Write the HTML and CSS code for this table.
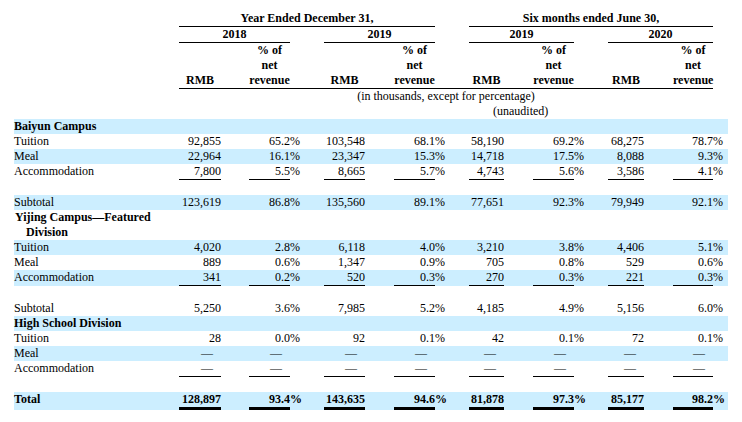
FILE: index.html
```html
<!DOCTYPE html>
<html>
<head>
<meta charset="utf-8">
<link rel="stylesheet" href="styles.css">
</head>
<body>
<div class="page">
<table class="fin">
<colgroup>
<col class="w-label"><col class="w42"><col class="w28"><col class="w41"><col class="w10"><col class="w24">
<col class="w41"><col class="w29"><col class="w41"><col class="w10"><col class="w24">
<col class="w35"><col class="w29"><col class="w41"><col class="w10"><col class="w24">
<col class="w36"><col class="w29"><col class="w40"><col class="w10"><col class="w5">
</colgroup>
<tr>
<td></td>
<td colspan="8" class="c b bb">Year Ended December 31,</td>
<td colspan="2"></td>
<td colspan="8" class="c b bb">Six months ended June 30,</td>
<td colspan="2"></td>
</tr>
<tr>
<td></td>
<td colspan="3" class="c b bb">2018</td><td colspan="2"></td>
<td colspan="3" class="c b bb">2019</td><td colspan="2"></td>
<td colspan="3" class="c b bb">2019</td><td colspan="2"></td>
<td colspan="3" class="c b bb">2020</td><td colspan="2"></td>
</tr>
<tr class="hdr">
<td></td>
<td class="c b bb">RMB</td><td class="bb"></td><td class="c b bb">% of<br>net<br>revenue</td><td class="bb"></td><td class="bb"></td>
<td class="c b bb">RMB</td><td class="bb"></td><td class="c b bb">% of<br>net<br>revenue</td><td class="bb"></td><td class="bb"></td>
<td class="c b bb">RMB</td><td class="bb"></td><td class="c b bb">% of<br>net<br>revenue</td><td class="bb"></td><td class="bb"></td>
<td class="c b bb">RMB</td><td class="bb"></td><td class="c b bb">% of<br>net<br>revenue</td>
<td colspan="2"></td>
</tr>
<tr>
<td></td>
<td colspan="18" class="c note">(in thousands, except for percentage)</td>
<td colspan="2"></td>
</tr>
<tr>
<td></td>
<td colspan="10"></td>
<td colspan="8" class="unaud">(unaudited)</td>
<td colspan="2"></td>
</tr>

<tr class="hl"><td class="lbl b">Baiyun Campus</td><td colspan="20"></td></tr>
<tr>
<td class="lbl">Tuition</td>
<td class="r">92,855</td><td></td><td class="r">65.2</td><td>%</td><td></td>
<td class="r">103,548</td><td></td><td class="r">68.1</td><td>%</td><td></td>
<td class="r">58,190</td><td></td><td class="r">69.2</td><td>%</td><td></td>
<td class="r">68,275</td><td></td><td class="r">78.7</td><td>%</td><td></td>
</tr>
<tr class="hl">
<td class="lbl">Meal</td>
<td class="r">22,964</td><td></td><td class="r">16.1</td><td>%</td><td></td>
<td class="r">23,347</td><td></td><td class="r">15.3</td><td>%</td><td></td>
<td class="r">14,718</td><td></td><td class="r">17.5</td><td>%</td><td></td>
<td class="r">8,088</td><td></td><td class="r">9.3</td><td>%</td><td></td>
</tr>
<tr>
<td class="lbl">Accommodation</td>
<td class="r bb">7,800</td><td></td><td class="r bb">5.5</td><td>%</td><td></td>
<td class="r bb">8,665</td><td></td><td class="r bb">5.7</td><td>%</td><td></td>
<td class="r bb">4,743</td><td></td><td class="r bb">5.6</td><td>%</td><td></td>
<td class="r bb">3,586</td><td></td><td class="r bb">4.1</td><td>%</td><td></td>
</tr>
<tr class="sp"><td colspan="21"></td></tr>
<tr class="hl">
<td class="lbl">Subtotal</td>
<td class="r">123,619</td><td></td><td class="r">86.8</td><td>%</td><td></td>
<td class="r">135,560</td><td></td><td class="r">89.1</td><td>%</td><td></td>
<td class="r">77,651</td><td></td><td class="r">92.3</td><td>%</td><td></td>
<td class="r">79,949</td><td></td><td class="r">92.1</td><td>%</td><td></td>
</tr>

<tr><td class="lbl b wrap">Yijing Campus—Featured Division</td><td colspan="20"></td></tr>
<tr class="hl">
<td class="lbl">Tuition</td>
<td class="r">4,020</td><td></td><td class="r">2.8</td><td>%</td><td></td>
<td class="r">6,118</td><td></td><td class="r">4.0</td><td>%</td><td></td>
<td class="r">3,210</td><td></td><td class="r">3.8</td><td>%</td><td></td>
<td class="r">4,406</td><td></td><td class="r">5.1</td><td>%</td><td></td>
</tr>
<tr>
<td class="lbl">Meal</td>
<td class="r">889</td><td></td><td class="r">0.6</td><td>%</td><td></td>
<td class="r">1,347</td><td></td><td class="r">0.9</td><td>%</td><td></td>
<td class="r">705</td><td></td><td class="r">0.8</td><td>%</td><td></td>
<td class="r">529</td><td></td><td class="r">0.6</td><td>%</td><td></td>
</tr>
<tr class="hl">
<td class="lbl">Accommodation</td>
<td class="r bb">341</td><td></td><td class="r bb">0.2</td><td>%</td><td></td>
<td class="r bb">520</td><td></td><td class="r bb">0.3</td><td>%</td><td></td>
<td class="r bb">270</td><td></td><td class="r bb">0.3</td><td>%</td><td></td>
<td class="r bb">221</td><td></td><td class="r bb">0.3</td><td>%</td><td></td>
</tr>
<tr class="sp"><td colspan="21"></td></tr>
<tr>
<td class="lbl">Subtotal</td>
<td class="r">5,250</td><td></td><td class="r">3.6</td><td>%</td><td></td>
<td class="r">7,985</td><td></td><td class="r">5.2</td><td>%</td><td></td>
<td class="r">4,185</td><td></td><td class="r">4.9</td><td>%</td><td></td>
<td class="r">5,156</td><td></td><td class="r">6.0</td><td>%</td><td></td>
</tr>

<tr class="hl"><td class="lbl b">High School Division</td><td colspan="20"></td></tr>
<tr>
<td class="lbl">Tuition</td>
<td class="r">28</td><td></td><td class="r">0.0</td><td>%</td><td></td>
<td class="r">92</td><td></td><td class="r">0.1</td><td>%</td><td></td>
<td class="r">42</td><td></td><td class="r">0.1</td><td>%</td><td></td>
<td class="r">72</td><td></td><td class="r">0.1</td><td>%</td><td></td>
</tr>
<tr class="hl">
<td class="lbl">Meal</td>
<td class="r dash">—</td><td></td><td class="r dash">—</td><td></td><td></td>
<td class="r dash">—</td><td></td><td class="r dash">—</td><td></td><td></td>
<td class="r dash">—</td><td></td><td class="r dash">—</td><td></td><td></td>
<td class="r dash">—</td><td></td><td class="r dash">—</td><td></td><td></td>
</tr>
<tr>
<td class="lbl">Accommodation</td>
<td class="r dash bb">—</td><td></td><td class="r dash bb">—</td><td></td><td></td>
<td class="r dash bb">—</td><td></td><td class="r dash bb">—</td><td></td><td></td>
<td class="r dash bb">—</td><td></td><td class="r dash bb">—</td><td></td><td></td>
<td class="r dash bb">—</td><td></td><td class="r dash bb">—</td><td></td><td></td>
</tr>
<tr class="sp"><td colspan="21"></td></tr>
<tr class="hl b">
<td class="lbl">Total</td>
<td class="r bt">128,897</td><td></td><td class="r bt">93.4</td><td>%</td><td></td>
<td class="r bt">143,635</td><td></td><td class="r bt">94.6</td><td>%</td><td></td>
<td class="r bt">81,878</td><td></td><td class="r bt">97.3</td><td>%</td><td></td>
<td class="r bt">85,177</td><td></td><td class="r bt">98.2</td><td>%</td><td></td>
</tr>
</table>
</div>
</body>
</html>
```
FILE: styles.css
```css
html, body {
  margin: 0;
  padding: 0;
  background: #ffffff;
}

.page {
  padding: 11px 0 0 14px;
}

.fin {
  border-collapse: separate;
  border-spacing: 0;
  table-layout: fixed;
  width: 714px;
  font-family: "Liberation Serif", "Times New Roman", serif;
  font-size: 12px;
  line-height: 15px;
  color: #000000;
}

.fin td {
  padding: 0;
  vertical-align: top;
  white-space: nowrap;
}

.w-label { width: 165px; }
.w42 { width: 42px; }
.w41 { width: 41px; }
.w40 { width: 40px; }
.w36 { width: 36px; }
.w35 { width: 35px; }
.w29 { width: 29px; }
.w28 { width: 28px; }
.w24 { width: 24px; }
.w10 { width: 10px; }
.w5 { width: 5px; }

.hl { background: #cceeff; }

.b { font-weight: bold; }
.c { text-align: center; }
.r { text-align: right; }

.bb { border-bottom: 1px solid #000000; }
.bt { border-bottom: 3px solid #000000; }

.fin .hdr td { vertical-align: bottom; }

.note { padding-right: 8px; }
.fin .unaud { padding-left: 24px; text-align: left; }

.lbl { padding-left: 1px; }
.fin .wrap {
  white-space: normal;
  padding-left: 12px;
  text-indent: -11px;
}

.fin .dash { padding-right: 8px; }

.sp td { height: 15px; }
```
